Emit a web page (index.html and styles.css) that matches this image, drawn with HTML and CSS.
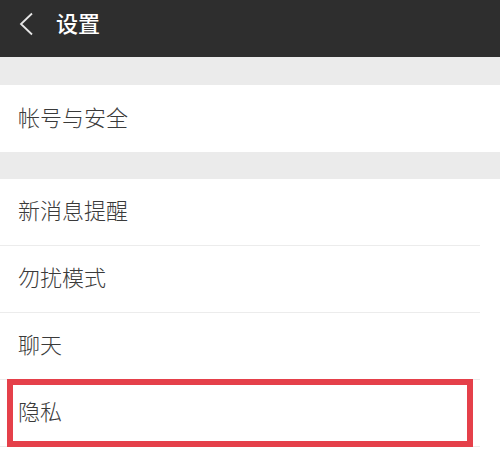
FILE: index.html
```html
<!DOCTYPE html>
<html lang="zh-CN">
<head>
<meta charset="utf-8">
<link rel="stylesheet" href="styles.css">
</head>
<body>
<header class="topbar">
  <svg class="back" width="16" height="24" viewBox="0 0 16 24"><path d="M14 1.5 L3 12 L14 22.5" fill="none" stroke="#e6e6e6" stroke-width="1.8"/></svg>
  <span class="title">设置</span>
</header>
<div class="gap first"></div>
<div class="group">
  <div class="item single">帐号与安全</div>
</div>
<div class="gap"></div>
<div class="group">
  <div class="item">新消息提醒</div>
  <div class="item">勿扰模式</div>
  <div class="item">聊天</div>
  <div class="item marked">隐私<span class="highlight"></span></div>
</div>
</body>
</html>
```
FILE: styles.css
```css
html, body {
  margin: 0;
  padding: 0;
  background: #ffffff;
  font-family: "Noto Sans CJK SC", "Noto Sans", sans-serif;
}
.topbar {
  height: 57px;
  background: #2e2e2e;
  display: flex;
  align-items: center;
  padding-left: 18px;
  padding-bottom: 10px;
  box-sizing: border-box;
}
.back {
  display: block;
}
.title {
  margin-left: 22px;
  color: #ffffff;
  font-size: 22px;
  font-weight: 500;
  line-height: 1;
  margin-top: -3px;
}
.gap {
  height: 27px;
  background: #ebebeb;
}
.gap.first {
  height: 28px;
}
.item {
  position: relative;
  box-sizing: border-box;
  height: 67px;
  display: flex;
  align-items: center;
  padding-left: 18px;
  padding-bottom: 6px;
  font-size: 22px;
  font-weight: 300;
  color: #3a3a3a;
  border-bottom: 1px solid #ececec;
  margin-right: 20px;
}
.item.single {
  height: 67px;
  border-bottom: none;
  margin-right: 0;
}
.highlight {
  position: absolute;
  left: 7px;
  top: -1px;
  width: 466px;
  height: 68px;
  box-sizing: border-box;
  border: 6px solid #e5404a;
}
```
